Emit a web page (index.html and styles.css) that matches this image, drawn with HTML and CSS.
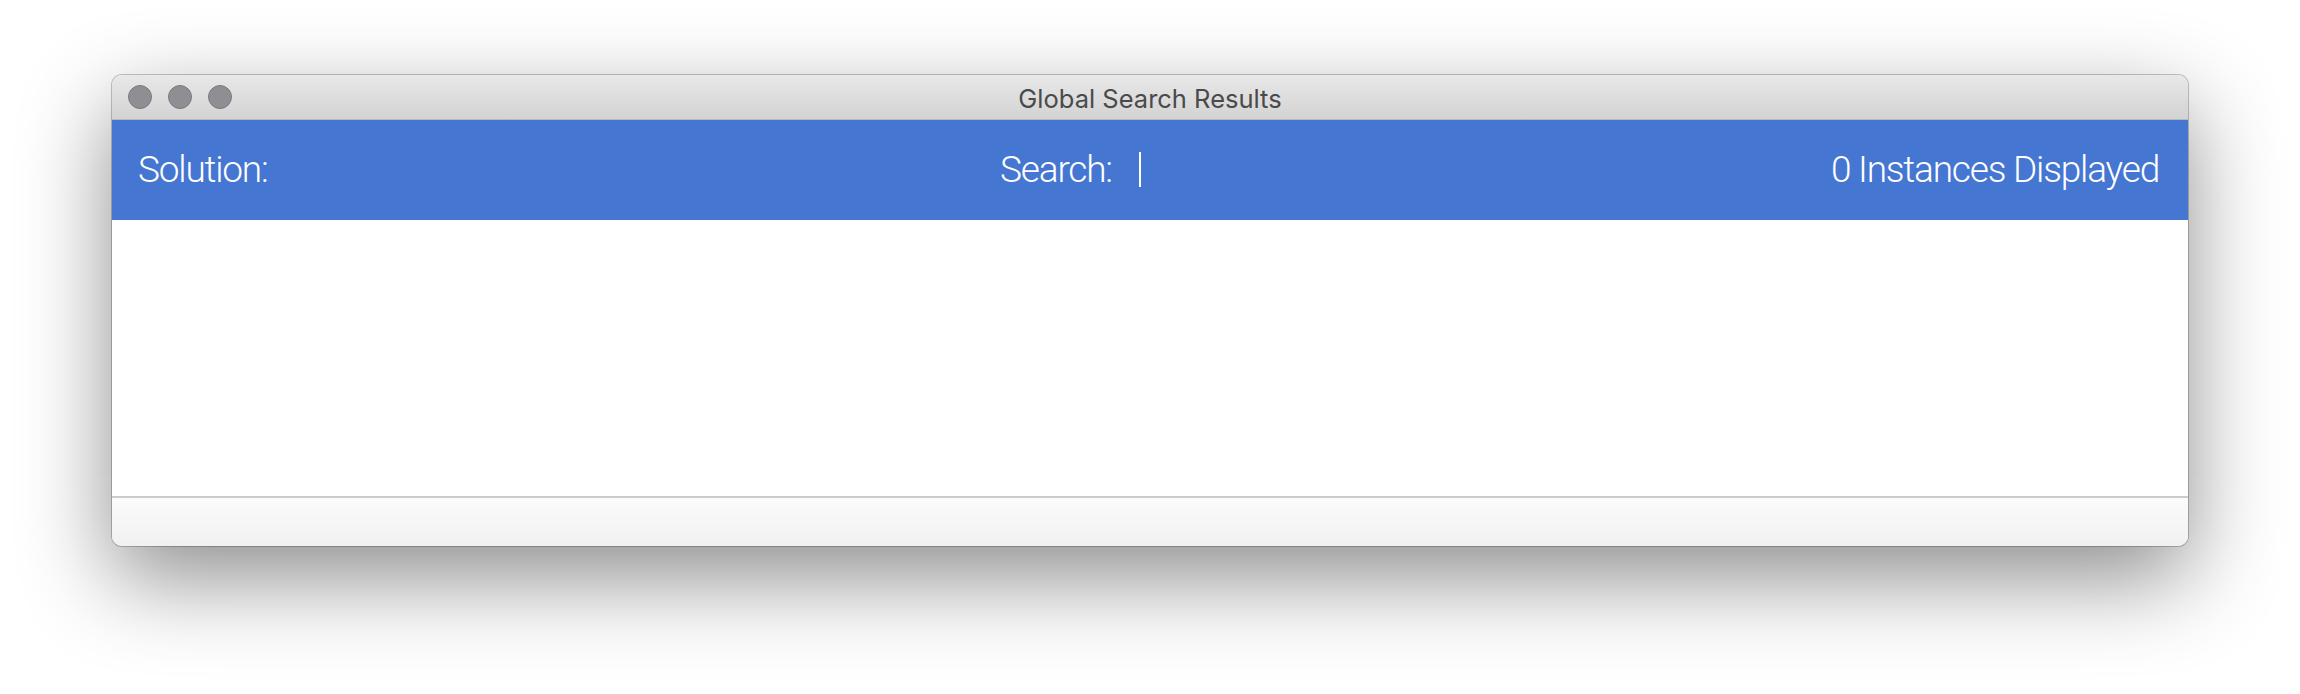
FILE: index.html
```html
<!DOCTYPE html>
<html>
<head>
<meta charset="utf-8">
<title>Global Search Results</title>
<link rel="stylesheet" href="styles.css">
</head>
<body>
<div class="stage">
  <div class="window">
    <div class="titlebar">
      <div class="lights">
        <span class="light"></span>
        <span class="light"></span>
        <span class="light"></span>
      </div>
      <div class="title">Global Search Results</div>
    </div>
    <div class="toolbar">
      <div class="solution">Solution:</div>
      <div class="search">
        <span class="search-label">Search:</span>
        <span class="search-field"><span class="caret"></span></span>
      </div>
      <div class="count">0 Instances Displayed</div>
    </div>
    <div class="content"></div>
    <div class="footer"></div>
  </div>
</div>
</body>
</html>
```
FILE: styles.css
```css
* {
  box-sizing: border-box;
}

html, body {
  margin: 0;
  padding: 0;
  background: #ffffff;
  width: 2300px;
  height: 694px;
  overflow: hidden;
}

.stage {
  padding: 75px 0 0 112px;
}

.window {
  width: 2076px;
  height: 471px;
  border-radius: 10px;
  overflow: hidden;
  display: flex;
  flex-direction: column;
  background: #ffffff;
  box-shadow: 0 0 0 1px rgba(0, 0, 0, 0.22), 0 32px 90px rgba(0, 0, 0, 0.45);
}

.titlebar {
  height: 45px;
  flex: none;
  display: grid;
  grid-template-columns: 1fr auto 1fr;
  align-items: center;
  background: linear-gradient(#e9e8e9, #d3d3d3);
  border-bottom: 1px solid #b9b9b9;
}

.lights {
  display: flex;
  gap: 16px;
  padding-left: 16px;
}

.light {
  width: 24px;
  height: 24px;
  border-radius: 50%;
  background: #8f8e93;
  border: 1px solid #7b7a7f;
}

.title {
  font-family: Inter, "Noto Sans", sans-serif;
  font-size: 25.5px;
  color: #4a4a4a;
  padding-top: 2px;
}

.toolbar {
  height: 100px;
  flex: none;
  display: grid;
  grid-template-columns: 1fr auto 1fr;
  align-items: center;
  background: #4576d2;
  color: #ffffff;
  font-family: Roboto, "Liberation Sans", sans-serif;
  font-weight: 300;
  font-size: 37px;
  letter-spacing: -1.2px;
  padding: 0 29px 2px 26px;
}

.search {
  display: flex;
  align-items: center;
}

.search-field {
  width: 158px;
  height: 36px;
  margin-left: 27px;
  display: flex;
  align-items: center;
}

.caret {
  width: 2px;
  height: 35px;
  background: #ffffff;
}

.count {
  justify-self: end;
}

.content {
  flex: 1;
  background: #ffffff;
  border-bottom: 2px solid #cbcbcb;
}

.footer {
  height: 48px;
  flex: none;
  background: linear-gradient(#fbfbfb, #f1f1f1);
}
```
